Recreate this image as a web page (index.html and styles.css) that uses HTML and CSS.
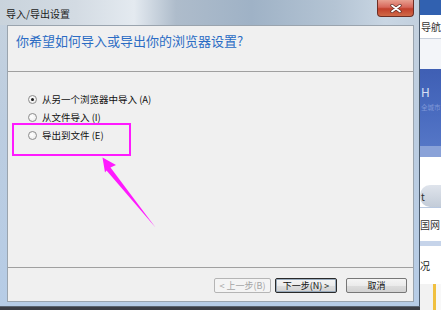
FILE: index.html
```html
<!DOCTYPE html>
<html lang="zh-CN">
<head>
<meta charset="utf-8">
<title>导入/导出设置</title>
<link rel="stylesheet" href="styles.css">
</head>
<body>
<div class="screen">
  <div class="window">
    <div class="titlebar">
      <span class="title">导入/导出设置</span>
      <div class="close">
        <svg width="12" height="9" viewBox="0 0 12 9"><path d="M2 1.5 L10 7.5 M10 1.5 L2 7.5" stroke="#5a2a22" stroke-width="3.2" stroke-linecap="round"/><path d="M2 1.5 L10 7.5 M10 1.5 L2 7.5" stroke="#ffffff" stroke-width="1.8" stroke-linecap="round"/></svg>
      </div>
    </div>
    <div class="frame">
      <div class="panel">
        <div class="header">你希望如何导入或导出你的浏览器设置?</div>
        <div class="body">
          <div class="option"><span class="radio checked"></span><span>从另一个浏览器中导入 (A)</span></div>
          <div class="option"><span class="radio"></span><span>从文件导入 (I)</span></div>
          <div class="option"><span class="radio"></span><span>导出到文件 (E)</span></div>
        </div>
        <div class="footer">
          <div class="btn disabled btn-prev">&lt; 上一步(B)</div>
          <div class="btn focused btn-next">下一步(N) &gt;</div>
          <div class="btn btn-cancel">取消</div>
        </div>
      </div>
    </div>
  </div>
  <div class="bg">
    <div class="bg-top"></div>
    <div class="bg-nav"><span>导航</span></div>
    <div class="bg-light"></div>
    <div class="bg-blue"><span class="h">H</span><span class="faint">全城市</span></div>
    <div class="bg-band"></div>
    <div class="bg-white"></div>
    <div class="bg-pill"><span>t</span></div>
    <div class="bg-text"><span>国网</span></div>
    <div class="bg-band2"></div>
    <div class="bg-text2"><span>况</span></div>
    <div class="bg-bottom"></div>
  </div>
  <div class="mark-box"></div>
  <svg class="mark-arrow" width="441" height="310" viewBox="0 0 441 310">
    <polygon points="102.5,157.5 116,165 110.5,167.5 155.5,227.5 106.5,170.5 105,172.5" fill="#ff1aff"/>
  </svg>
</div>
</body>
</html>
```

FILE: styles.css
```css
html, body {
  margin: 0;
  padding: 0;
}
body {
  width: 441px;
  height: 310px;
  overflow: hidden;
  font-family: "Noto Sans CJK SC", "Noto Sans", "Liberation Sans", sans-serif;
}
.screen {
  position: relative;
  display: flex;
  width: 441px;
  height: 310px;
  background: #3b3d44;
}
.window {
  width: 420px;
  height: 307px;
  display: flex;
  flex-direction: column;
  background: linear-gradient(180deg, #c6d2de 0%, #bccde0 40%, #b6cce6 100%);
  border-right: 1px solid #4a5a6c;
  box-sizing: border-box;
  border-bottom: 1px solid #5a6470;
}
.titlebar {
  height: 25px;
  display: flex;
  align-items: flex-start;
  background: linear-gradient(90deg, #c9d3dc 0%, #d3dbe3 18%, #e4eaf0 32%, #aebccb 42%, #9fb2c6 60%, #b4c4d4 80%, #c9d6e3 92%, #c2d0de 100%);
}
.title {
  font-size: 10px;
  line-height: 12px;
  color: #1b1b1b;
  margin: 8px 0 0 6px;
  flex: 1;
}
.close {
  width: 37px;
  height: 17px;
  margin-right: 5px;
  box-sizing: border-box;
  border: 1px solid #6d2e24;
  border-top: none;
  border-radius: 0 0 4px 4px;
  background: linear-gradient(180deg, #e8a090 0%, #d7675a 45%, #c2402c 55%, #d06a48 100%);
  display: flex;
  align-items: center;
  justify-content: center;
}
.frame {
  flex: 1;
  display: flex;
  padding: 0 5px 4px 7px;
}
.panel {
  flex: 1;
  display: flex;
  flex-direction: column;
  background: #f0f0f0;
  border: 1px solid #9aa4ae;
}
.header {
  height: 46px;
  box-sizing: border-box;
  padding: 7px 0 0 8px;
  font-size: 13px;
  line-height: 16px;
  color: #2b6cc4;
  border-bottom: 1px solid #a0a0a0;
}
.body {
  flex: 1;
  padding: 18px 0 0 20px;
  border-bottom: 1px solid #a0a0a0;
}
.option {
  height: 18px;
  display: flex;
  align-items: center;
  gap: 5px;
  font-size: 9.5px;
  color: #111;
}
.radio {
  width: 9px;
  height: 9px;
  box-sizing: border-box;
  border-radius: 50%;
  border: 1px solid #8c8c8c;
  background: radial-gradient(circle at 40% 40%, #ffffff 0%, #e8e8e8 100%);
  display: flex;
  align-items: center;
  justify-content: center;
}
.radio.checked::after {
  content: "";
  width: 3px;
  height: 3px;
  border-radius: 50%;
  background: #1a1a1a;
}
.footer {
  height: 33px;
  box-sizing: border-box;
  display: flex;
  justify-content: flex-end;
  align-items: flex-start;
  padding: 10px 6px 0 0;
}
.btn {
  height: 15px;
  box-sizing: border-box;
  border: 1px solid #777;
  border-radius: 2px;
  background: linear-gradient(180deg, #f5f5f5 0%, #ebebeb 50%, #dddddd 51%, #d2d2d2 100%);
  font-size: 9px;
  line-height: 13px;
  text-align: center;
  color: #111;
}
.btn.disabled {
  border-color: #b5b5b5;
  background: #f4f4f4;
  color: #a5a5a5;
}
.btn.focused {
  border: 1px solid #2a2a2a;
  box-shadow: inset 0 0 0 1px #9ab;
}
.btn-prev { width: 57px; }
.btn-next { width: 62px; margin-left: 4px; }
.btn-cancel { width: 61px; margin-left: 9px; }
.bg {
  width: 21px;
  height: 310px;
  display: flex;
  flex-direction: column;
  background: #fff;
  overflow: hidden;
  font-size: 10px;
}
.bg-top { height: 15px; background: #3161b0; }
.bg-nav {
  height: 23px;
  background: #fff;
  border-bottom: 1px solid #c8d0dc;
  display: flex;
  justify-content: flex-end;
  align-items: center;
  color: #333;
}
.bg-nav span, .bg-text span, .bg-text2 span, .bg-pill span { white-space: nowrap; flex-shrink: 0; }
.bg-light { height: 30px; background: #f3f5f9; }
.bg-blue {
  height: 77px;
  background: linear-gradient(180deg, #3f5fb4 0%, #4a6cc0 60%, #5576c6 100%);
  display: flex;
  flex-direction: column;
  padding-left: 1px;
  box-sizing: border-box;
  padding-top: 16px;
}
.bg-blue .h { color: #d8e0f4; font-size: 12px; line-height: 14px; }
.bg-blue .faint { color: #7f98d8; font-size: 6.5px; line-height: 16px; white-space: nowrap; }
.bg-band { height: 11px; background: #8aa2d8; }
.bg-white { height: 28px; background: #fff; }
.bg-pill {
  height: 22px;
  background: linear-gradient(180deg, #dfe4ec, #c3ccd8);
  border-radius: 10px 0 0 10px;
  color: #333;
  display: flex;
  align-items: center;
  padding-left: 1px;
}
.bg-text {
  height: 33px;
  background: #fff;
  color: #333;
  display: flex;
  align-items: center;
  border-top: 1px solid #b8c8e0;
}
.bg-band2 { height: 5px; background: #c6d4ea; }
.bg-text2 {
  height: 38px;
  display: flex;
  align-items: center;
  color: #222;
  background: #fff;
}
.bg-bottom {
  flex: 1;
  background: linear-gradient(90deg, #f2f2f2 0%, #f2f2f2 60%, #f0c040 60%, #f0c040 75%, #f8f8f8 75%);
}
.mark-box {
  position: absolute;
  left: 12px;
  top: 123px;
  width: 119px;
  height: 33px;
  box-sizing: border-box;
  border: 2px solid #ff1aff;
}
.mark-arrow {
  position: absolute;
  left: 0;
  top: 0;
  pointer-events: none;
}
```
